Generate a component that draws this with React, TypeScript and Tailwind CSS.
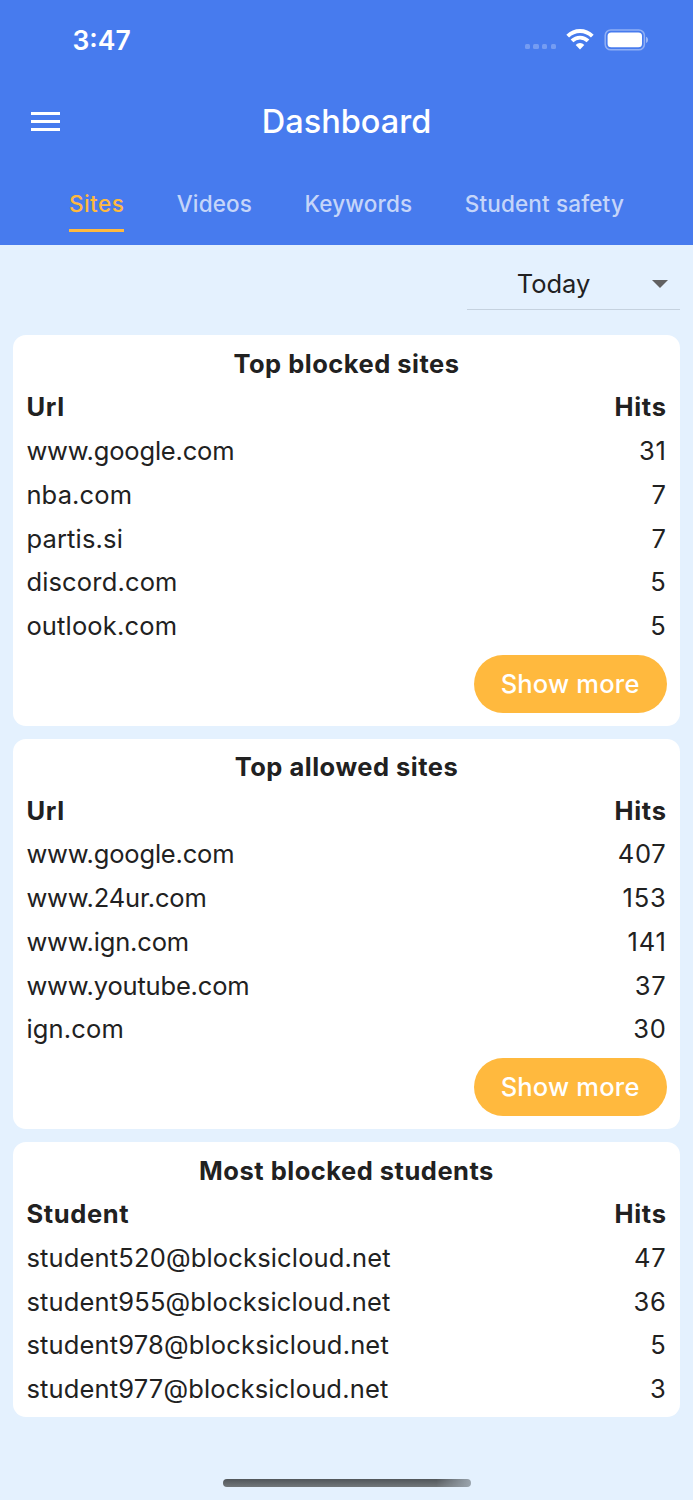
import React, { useState } from "react";

interface Row {
  name: string;
  hits: number;
}

interface StatsCardProps {
  title: string;
  column: string;
  rows: Row[];
  showMore?: boolean;
}

const blockedSites: Row[] = [
  { name: "www.google.com", hits: 31 },
  { name: "nba.com", hits: 7 },
  { name: "partis.si", hits: 7 },
  { name: "discord.com", hits: 5 },
  { name: "outlook.com", hits: 5 },
];

const allowedSites: Row[] = [
  { name: "www.google.com", hits: 407 },
  { name: "www.24ur.com", hits: 153 },
  { name: "www.ign.com", hits: 141 },
  { name: "www.youtube.com", hits: 37 },
  { name: "ign.com", hits: 30 },
];

const blockedStudents: Row[] = [
  { name: "student520@blocksicloud.net", hits: 47 },
  { name: "student955@blocksicloud.net", hits: 36 },
  { name: "student978@blocksicloud.net", hits: 5 },
  { name: "student977@blocksicloud.net", hits: 3 },
];

const tabs = ["Sites", "Videos", "Keywords", "Student safety"];

const StatusBar: React.FC = () => (
  <div className="flex h-[79px] items-center justify-between pl-[72.5px] pr-11">
    <span className="pt-px text-[26.5px] leading-none font-semibold">3:47</span>
    <div className="flex items-center">
      {/* No signal */}
      <div className="mt-[14px] flex gap-[3.3px]">
        {[0, 1, 2, 3].map((n) => (
          <span key={n} className="h-[5.5px] w-[5.4px] rounded-[1.5px] bg-white/25" />
        ))}
      </div>
      <svg className="ml-[10px] h-[21px] w-[28px]" viewBox="0 0 28 21" fill="none" stroke="white">
        <path d="M1.7 7.1C8.7 .3 19.3 .3 26.3 7.1" strokeWidth="3.9" />
        <path d="M6 11.9C10.6 7.5 17.4 7.5 22 11.9" strokeWidth="3.9" />
        <path d="M14 20.5L9.7 16C12 13.3 16 13.3 18.3 16Z" fill="white" stroke="none" />
      </svg>
      <svg className="ml-[10px] h-[22px] w-[45px]" viewBox="0 0 45 22">
        <rect x="1.2" y="1" width="39.2" height="19.8" rx="5.6" fill="none" stroke="white" strokeOpacity=".4" strokeWidth="1.5" />
        <rect x="3.6" y="3.5" width="34.4" height="14.8" rx="3.6" fill="white" />
        <path d="M42 7.8C44.8 9 44.8 12.8 42 14Z" fill="white" fillOpacity=".45" />
      </svg>
    </div>
  </div>
);

const StatsCard: React.FC<StatsCardProps> = ({ title, column, rows, showMore }) => (
  <section className="rounded-[13px] bg-white px-[13.4px] pt-[6.7px] pb-[6.4px]">
    <h2 className="h-[43.75px] text-center leading-[43.75px] font-bold tracking-[0.5px]">{title}</h2>
    <div className="flex h-[43.75px] items-center justify-between font-bold tracking-[0.65px]">
      <span>{column}</span>
      <span>Hits</span>
    </div>
    {rows.map((row) => (
      <div key={row.name} className="flex h-[43.75px] items-center justify-between">
        <span className={row.name.startsWith("www.") ? "tracking-[-0.18px]" : "tracking-[0.16px]"}>{row.name}</span>
        <span className="tracking-[0.8px]">{row.hits}</span>
      </div>
    ))}
    {showMore && (
      <div className="flex justify-end pt-[6.5px] pb-[6.7px]">
        <button className="h-[58px] w-[193px] rounded-full bg-[#ffb93e] font-medium tracking-[0.2px] text-white">
          Show more
        </button>
      </div>
    )}
  </section>
);

const App: React.FC = () => {
  const [activeTab, setActiveTab] = useState("Sites");

  return (
    <div className="flex h-[1500px] w-[693px] flex-col bg-[#e4f1fe] font-[Inter,sans-serif] text-[25.5px] text-[#212121]">
      <header className="h-[244.5px] bg-[#477bee] text-white">
        <StatusBar />
        <div className="grid h-[85px] grid-cols-[1fr_auto_1fr] items-center px-[31px]">
          <button aria-label="Menu" className="flex w-[29px] flex-col gap-[4.8px]">
            <span className="h-[3.3px] bg-white" />
            <span className="h-[3.3px] bg-white" />
            <span className="h-[3.3px] bg-white" />
          </button>
          <h1 className="pt-[2px] text-[32.5px] leading-none font-medium">Dashboard</h1>
        </div>
        <nav className="flex justify-between px-[69px] pt-[19px]">
          {tabs.map((tab) => (
            <button
              key={tab}
              onClick={() => setActiveTab(tab)}
              className={`h-[49px] border-b-[3.4px] pb-[4px] text-[22.5px] leading-none font-medium ${
                tab === activeTab
                  ? "border-[#ffb93e] tracking-[0.45px] text-[#ffb93e]"
                  : "border-transparent tracking-[0.15px] text-white/70"
              }`}
            >
              {tab}
            </button>
          ))}
        </nav>
      </header>

      <main className="flex flex-col px-[13px]">
        <button className="flex h-[65px] w-[213px] items-center self-end border-b border-[#c5d2df] pt-[14px] pr-[12px]">
          <span className="flex-1 pt-px pr-[12px]">Today</span>
          <svg className="h-[8px] w-[16px]" viewBox="0 0 16 8">
            <path d="M0 0H16L8 8Z" fill="#616161" />
          </svg>
        </button>

        <div className="mt-[25.7px] flex flex-col gap-[12.8px]">
          <StatsCard title="Top blocked sites" column="Url" rows={blockedSites} showMore />
          <StatsCard title="Top allowed sites" column="Url" rows={allowedSites} showMore />
          <StatsCard title="Most blocked students" column="Student" rows={blockedStudents} />
        </div>
      </main>

      {/* Home indicator */}
      <div className="mx-auto mt-auto mb-[13px] h-[8.5px] w-[248px] rounded-full bg-[linear-gradient(to_right,transparent_86%,#9aa4ad),linear-gradient(#51565a,#72777a)]" />
    </div>
  );
};

export default App;
